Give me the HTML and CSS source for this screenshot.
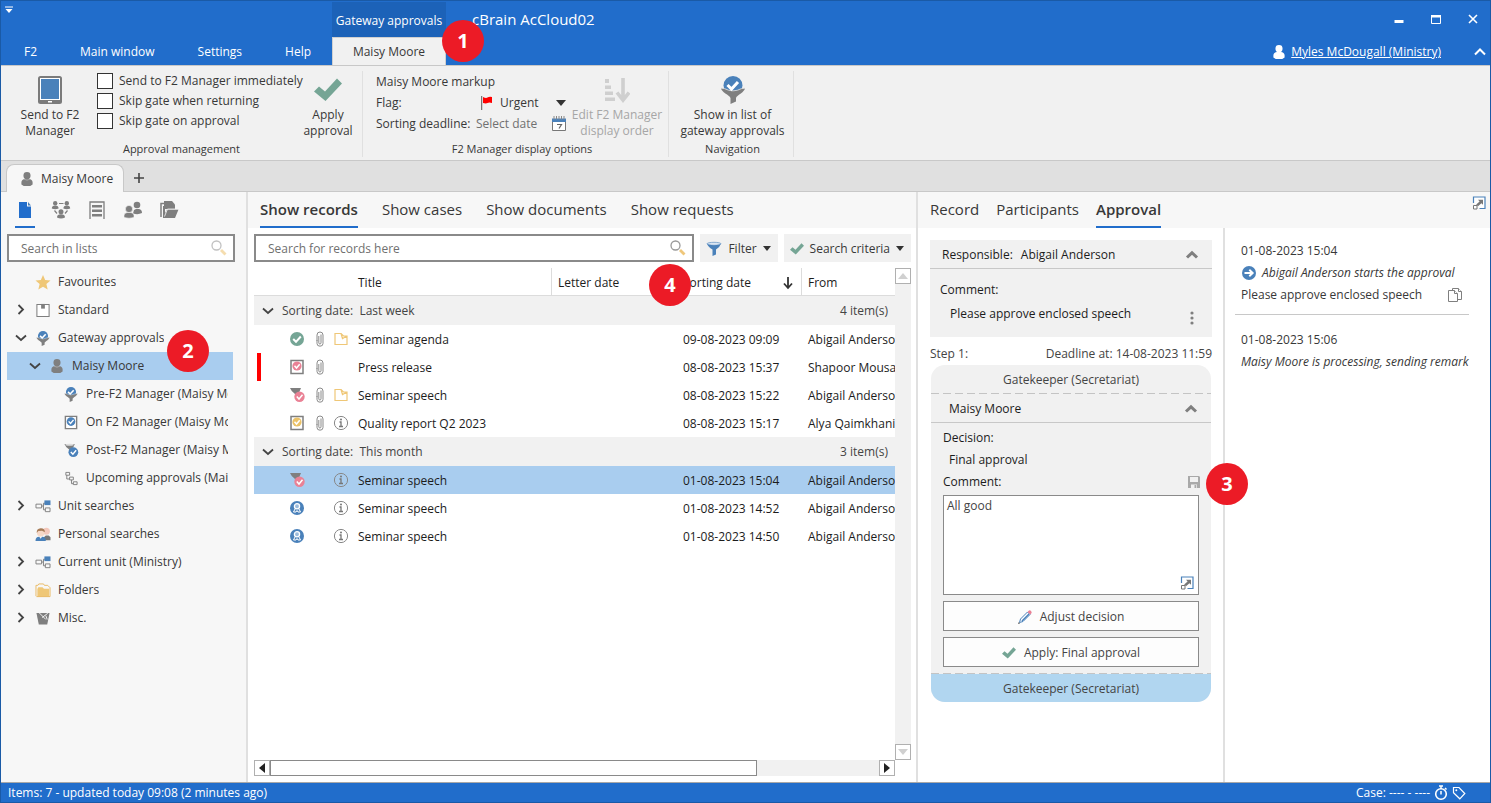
FILE: index.html
```html
<!DOCTYPE html>
<html lang="en">
<head>
<meta charset="utf-8">
<title>cBrain AcCloud02</title>
<link rel="stylesheet" href="styles.css">
</head>
<body>
<svg class="defs" aria-hidden="true">
  <symbol id="user" viewBox="0 0 12 15"><path d="M6 0a3.8 3.8 0 0 1 3.8 3.9c0 1.600-.7 3-1.800 3.600 2.300.3 4 1.300 4 3.500v2.500L9.500 15h-7L0 13.500V11c0-2.200 1.700-3.200 4-3.500C2.900 6.900 2.200 5.500 2.200 3.900A3.800 3.800 0 0 1 6 0z" fill="currentColor"/><path d="M3 7.800q3 1.800 6 0" fill="none" stroke="#fff" stroke-opacity=".35"/></symbol>
  <symbol id="gate" viewBox="0 0 24 28"><circle cx="12" cy="9.500" r="9.500" fill="#4a81ba"/><path d="M0 12l3.500.5q8.500 4.500 17 0L24 12c0 4-8 7-9 10v3.500L9.500 28v-6C8.500 19 0 16 0 12z" fill="#7f7f7f"/><path d="M0 12.300l3.500.3q8.500 4.500 17 0l3.500-.3" fill="none" stroke="#e4e4e4" stroke-width=".8"/><path d="M6.500 9l4 4 6.500-7" fill="none" stroke="#fff" stroke-width="3"/></symbol>
  <symbol id="check" viewBox="0 0 28 23"><path d="M0 13l5-5 6 5L23 0l5 5-16.500 17.500z" fill="#75a595"/></symbol>
  <symbol id="tablet-big" viewBox="0 0 24 28"><rect width="24" height="28" rx="2.500" fill="#7b7b7b"/><rect x="2.500" y="2.500" width="19" height="21" fill="#4a81ba" stroke="#fff"/><rect x="10" y="25" width="4" height="1.500" fill="#fff"/></symbol>
  <symbol id="order" viewBox="0 0 26 26"><path d="M1 2h4v4H1zM1 8.500h6v3.500H1zM1 14.500h8V18H1zM1 20.500h10V24H1z" fill="#cfcfcf"/><path d="M19 1v22M13 15.500l6 7.500 6-7.500" fill="none" stroke="#cfcfcf" stroke-width="3.600"/></symbol>
  <symbol id="down" viewBox="0 0 10 6"><path d="M0 0h10L5 6z" fill="#333"/></symbol>
  <symbol id="flag" viewBox="0 0 11 14"><path d="M.5 0v14" stroke="#777" stroke-width="1.500"/><path d="M2 1q3 1.500 4.500.5T11 1v6q-3-.8-4.500 0T2 7z" fill="#f00"/></symbol>
  <symbol id="cal" viewBox="0 0 14 15"><path d="M.5 5v9.500h13V5" fill="#fff" stroke="#777"/><path d="M0 2.500h14V6H0z" fill="#4a81ba"/><path d="M2 0v3.500M4.500 0v3.500M7 0v3.500M9.500 0v3.500M12 0v3.500" stroke="#888"/><path d="M5 8.500h4.500L7 12.500" fill="none" stroke="#666" stroke-width="1.200"/></symbol>
  <symbol id="chev-r" viewBox="0 0 14 14"><path d="M4.500 2L9 6.500 4.500 11" fill="none" stroke="#444" stroke-width="1.800"/></symbol>
  <symbol id="chev-d" viewBox="0 0 14 14"><path d="M2 4.500l5 4.500 5-4.500" fill="none" stroke="#444" stroke-width="1.800"/></symbol>
  <symbol id="chev-u" viewBox="0 0 14 14"><path d="M2 9.500L7 4.800l5 4.700" fill="none" stroke="currentColor" stroke-width="3"/></symbol>
  <symbol id="mag" viewBox="0 0 16 16"><circle cx="5.500" cy="5.500" r="4.500" fill="none" stroke="#999" stroke-width="1.300"/><path d="M10 10l4.500 4.500" stroke="#efc77b" stroke-width="2.800"/></symbol>
  <symbol id="doc" viewBox="0 0 16 18"><path d="M2 1h8v4.500h4V17H2z" fill="#216dcb"/><path d="M11 1l3 3.500h-3z" fill="#4a81ba"/></symbol>
  <symbol id="network" viewBox="0 0 20 18"><g fill="#7f7f7f"><circle cx="4.200" cy="2.300" r="2.200"/><circle cx="15.800" cy="2.300" r="2.200"/><circle cx="10" cy="10.800" r="2.500"/><path d="M.8 7.500q0-3 3.400-3t3.400 3q-3.400 1.400-6.800 0zM12.400 7.500q0-3 3.400-3t3.400 3q-3.400 1.400-6.800 0zM6 16.500q0-3.200 4-3.200t4 3.200q-4 2-8 0z"/></g><path d="M8 2.500h4.500M3.500 9.500L6 12.500M16.500 9.500L14 12.500" fill="none" stroke="#7f7f7f" stroke-width="1.200"/></symbol>
  <symbol id="cabinet" viewBox="0 0 16 18"><path d="M1 18V1h14v17" fill="none" stroke="#7f7f7f" stroke-width="1.300"/><path d="M3 4h10v2.500H3zM3 8.500h10V11H3zM3 13h10v2.500H3z" fill="#7f7f7f"/></symbol>
  <symbol id="people" viewBox="0 0 18 17"><g fill="#7f7f7f"><circle cx="13" cy="3.500" r="3.300"/><path d="M9 12l1-3.500 2-1h3c2 .5 3 1.500 3 4q-4 2-9 .5z"/><circle cx="5" cy="7.500" r="3.600" stroke="#f7f7f7" stroke-width=".6"/><path d="M0 16v-2q0-2.500 3-3h4q3 .5 3 3v2q-5 1.500-10 0z" stroke="#f7f7f7" stroke-width=".6"/></g></symbol>
  <symbol id="openfolder" viewBox="0 0 19 18"><path d="M4 0h8l3 3.500V8H4z" fill="#7f7f7f"/><path d="M1 16V2.500h3" fill="none" stroke="#7f7f7f" stroke-width="1.500"/><path d="M3 5h2v7L7 8.500h11.500L15 17H3z" fill="#7f7f7f"/><path d="M4.500 15.500L7.500 8H19" fill="none" stroke="#f7f7f7" stroke-width=".8"/></symbol>
  <symbol id="star" viewBox="0 0 16 16"><path d="M8 0l2.300 5.400 5.700.5-4.400 3.800 1.400 5.800L8 12.400 3 15.500l1.400-5.800L0 5.900l5.700-.5z" fill="#efc777"/></symbol>
  <symbol id="box" viewBox="0 0 16 16"><path d="M1.500 1.500h13v13h-13z" fill="#fff" stroke="#7f7f7f" stroke-width="1.100"/><path d="M6 1h4v5H6z" fill="#7f7f7f"/></symbol>
  <symbol id="tab-blue" viewBox="0 0 14 16"><path d="M1 1.500h12v13H1z" fill="#fff" stroke="#7f7f7f" stroke-width="1.500"/><circle cx="7" cy="7" r="4.600" fill="#4a81ba"/><path d="M4.500 6.800L6.500 9l3.200-3.800" fill="none" stroke="#fff" stroke-width="1.500"/></symbol>
  <symbol id="tab-pink" viewBox="0 0 14 16"><path d="M1 1.500h12v13H1z" fill="#fff" stroke="#7f7f7f" stroke-width="1.500"/><circle cx="7" cy="7" r="4.600" fill="#ea8195"/><path d="M4.500 6.800L6.500 9l3.200-3.800" fill="none" stroke="#fff" stroke-width="1.500"/></symbol>
  <symbol id="tab-gold" viewBox="0 0 14 16"><path d="M1 1.500h12v13H1z" fill="#fff" stroke="#7f7f7f" stroke-width="1.500"/><circle cx="7" cy="7" r="4.600" fill="#ebc268"/><path d="M4.500 6.800L6.500 9l3.200-3.800" fill="none" stroke="#fff" stroke-width="1.500"/></symbol>
  <symbol id="post-blue" viewBox="0 0 16 16"><path d="M1 1h11q-1 4-4 6v5l-2-1V7Q2 4 1 1z" fill="#7f7f7f"/><ellipse cx="6.500" cy="1.800" rx="4.500" ry="1" fill="#ddd"/><circle cx="10.500" cy="9.800" r="5.200" fill="#4a81ba"/><path d="M7.800 9.600L10 12l3.500-4.200" fill="none" stroke="#fff" stroke-width="1.500"/></symbol>
  <symbol id="post-pink" viewBox="0 0 16 16"><path d="M1 1h11q-1 4-4 6v5l-2-1V7Q2 4 1 1z" fill="#7f7f7f"/><circle cx="10.500" cy="9.800" r="5.200" fill="#ea8195"/><path d="M7.800 9.600L10 12l3.500-4.200" fill="none" stroke="#fff" stroke-width="1.500"/></symbol>
  <symbol id="steps" viewBox="0 0 16 16"><g fill="none" stroke="#7f7f7f"><path d="M2.500 1.500h4v3h-4zM6.500 6.500h4v3h-4zM10.500 11.500h4v3h-4zM3.500 4.500v4h3M8.500 9.500v4h2"/></g></symbol>
  <symbol id="unit" viewBox="0 0 16 16"><path d="M.5 5.500h6v4h-6zM6.500 7.500h2v-3h2M8.500 7.500v4h2M10.500 9.500h5v4h-5z" fill="none" stroke="#7f7f7f"/><path d="M9.500 1.500h6.500v5H9.500z" fill="#4a81ba"/></symbol>
  <symbol id="person" viewBox="0 0 16 16"><circle cx="11.500" cy="4.500" r="3.800" fill="#f4c9bd"/><path d="M9 11l2-2h3l2 2v3H9z" fill="#777"/><circle cx="5.500" cy="6" r="4" fill="#f7d9c8"/><path d="M1.300 6.500Q1 1.500 5.500 1.300T10 5.500L7 4 3 4.200z" fill="#a77c58"/><path d="M0 15q0-4.500 4-4.500l1.500 2 1.500-2q4 0 4 4.500z" fill="#4a81ba"/></symbol>
  <symbol id="folders" viewBox="0 0 16 16"><path d="M.5 14V2.500h2l1-1.500h5l1 1.500h3.500l2.500 2.500" fill="none" stroke="#e9b961"/><path d="M2 6.500l1-2h4.500L9 6h5.500v8.500H2z" fill="#efc777"/><path d="M15.500 5v9.500H1" fill="none" stroke="#e9b961"/></symbol>
  <symbol id="bin" viewBox="0 0 16 16"><path d="M1 2h14l-2.500 12.500h-9z" fill="#7f7f7f"/><path d="M4 2l7 7M7 7l6-4.500M11 5l1.500 4" stroke="#f7f7f7" fill="none"/></symbol>
  <symbol id="ok" viewBox="0 0 16 16"><circle cx="8" cy="8" r="7" fill="#75a595"/><path d="M4.200 8L7 10.800l4.800-5.300" fill="none" stroke="#fff" stroke-width="2"/></symbol>
  <symbol id="clip" viewBox="0 0 10 16"><path d="M3.800 5v6.800q0 1.200 1.100 1.200T6 11.800V3.500M2 10V4q0-3 3-3t3 3v8.500q0 2.700-3 2.700t-3-2.700V9" fill="none" stroke="#8a8a8a"/></symbol>
  <symbol id="folder" viewBox="0 0 14 14"><path d="M1 12.500v-11h6L9.500 4H13v8.500zM7 1.500l1.500 5L13 4" fill="none" stroke="#efc777" stroke-width="1.200"/></symbol>
  <symbol id="info" viewBox="0 0 16 16"><circle cx="8" cy="8" r="6.600" fill="none" stroke="#888"/><path d="M6.500 7H8v4.500M6 11.500h4" fill="none" stroke="#777" stroke-width="1.300"/><circle cx="8" cy="4.500" r="1" fill="#777"/></symbol>
  <symbol id="award" viewBox="0 0 16 16"><circle cx="8" cy="8" r="7" fill="#4a81ba"/><circle cx="8" cy="6.300" r="2.600" fill="#9dbcdc" stroke="#fff" stroke-width="1.300"/><path d="M6 9l-1.500 3H7l1-1.500L9 12h2.500L10 9" fill="none" stroke="#fff" stroke-width="1"/></symbol>
  <symbol id="funnel" viewBox="0 0 16 16"><path d="M1 2.500h14q-1 3.500-5 6v5L6.500 15V8.500Q2 6 1 2.500z" fill="#4a81ba"/><ellipse cx="8" cy="2.800" rx="7" ry="1.500" fill="#dbe6f2" stroke="#4a81ba" stroke-width=".6"/></symbol>
  <symbol id="expand" viewBox="0 0 14 14"><path d="M1.500 7V1h11.500v11.500H7.500" fill="#fff" stroke="#4a81ba" stroke-width="1.200"/><path d="M6 3.800h5v5L9.400 7.200 6 10.300 4.200 8.500l3.400-3.100z" fill="#777"/><path d="M1.500 9.500h3.500V13H1.500z" fill="#fff" stroke="#777"/></symbol>
  <symbol id="save" viewBox="0 0 14 14"><path d="M1 1h11l1 1v11H1z" fill="#a9a9a9"/><path d="M3 2h8v5H3zM4 9.500h6V13H4z" fill="#f1f1f1"/><path d="M7.500 10h1.800v3H7.500z" fill="#a9a9a9"/></symbol>
  <symbol id="pencil" viewBox="0 0 14 14"><path d="M1.500 12.500l1-3.500 7-7 2.500 2.500-7 7z" fill="#fff" stroke="#4a81ba"/><path d="M4 11l7-7" stroke="#4a81ba" stroke-width="1.500"/><path d="M9.500 2q2-2.800 3.500-1t-.8 3.500z" fill="#ea8195"/><path d="M0 14l2-.5L.8 12z" fill="#555"/></symbol>
  <symbol id="go" viewBox="0 0 16 16"><circle cx="8" cy="8" r="7" fill="#4a81ba"/><path d="M3.500 8h8M8.300 4.700L11.700 8l-3.400 3.300" fill="none" stroke="#fff" stroke-width="1.900"/></symbol>
  <symbol id="copy" viewBox="0 0 16 16"><g fill="#fff" stroke="#7f7f7f"><path d="M5.500 1.500h6l3 3v8h-9z"/><path d="M11.500 1.500v3h3"/><path d="M1.500 3.500h6l3 3v8h-9z"/><path d="M7.500 3.500v3h3"/></g></symbol>
  <symbol id="timer" viewBox="0 0 14 16"><circle cx="7" cy="9" r="5.300" fill="none" stroke="#fff" stroke-width="1.600"/><path d="M7 9.500V6M5 1h4M7 1v3M11 3l1.500 1.500" stroke="#fff" stroke-width="1.500"/></symbol>
  <symbol id="tag" viewBox="0 0 14 14"><path d="M1.500 1.500h5.500l5.800 6-5 5.300-6.300-6z" fill="none" stroke="#fff" stroke-width="1.200"/><circle cx="4.300" cy="4.300" r="1" fill="#fff"/></symbol>
</svg>

<div class="window">
  <header class="titlebar">
    <button class="quick" aria-label="Customise toolbar"><svg width="8" height="8" viewBox="0 0 8 8"><path d="M0 1h8" stroke="#fff"/><path d="M.5 3h7L4 7z" fill="#fff"/></svg></button>
    <div class="context">Gateway approvals</div>
    <h1 class="apptitle">cBrain AcCloud02</h1>
    <div class="winbtns">
      <button aria-label="Minimise"><svg width="10" height="10" viewBox="0 0 10 10"><path d="M.5 6h9v3h-9z" fill="#fff"/></svg></button>
      <button aria-label="Maximise"><svg width="10" height="10" viewBox="0 0 10 10"><path d="M.5 1.500h9v8h-9z" fill="none" stroke="#fff"/><path d="M0 1h10v2.500H0z" fill="#fff"/></svg></button>
      <button aria-label="Close"><svg width="10" height="10" viewBox="0 0 10 10"><path d="M1 1l8 8M9 1L1 9" stroke="#fff" stroke-width="1.600"/></svg></button>
    </div>
    <nav class="menu"><a href="#">F2</a><a href="#">Main window</a><a href="#">Settings</a><a href="#">Help</a></nav>
    <a class="menu-active" href="#">Maisy Moore</a>
    <div class="account"><svg class="account-icon"><use href="#user"/></svg><a href="#">Myles McDougall (Ministry)</a><button aria-label="Collapse ribbon"><svg width="12" height="12" viewBox="0 0 12 12"><path d="M1 8.500l5-5 5 5" fill="none" stroke="#fff" stroke-width="2"/></svg></button></div>
    <span class="callout callout-1">1</span>
  </header>

  <section class="ribbon">
    <div class="group group-approval">
      <div class="group-body">
        <button class="big big-send"><svg width="24" height="28"><use href="#tablet-big"/></svg><span>Send to F2<br>Manager</span></button>
        <div class="checks">
          <label><input type="checkbox">Send to F2 Manager immediately</label>
          <label><input type="checkbox">Skip gate when returning</label>
          <label><input type="checkbox">Skip gate on approval</label>
        </div>
        <button class="big big-apply"><svg width="28" height="28"><use href="#check"/></svg><span>Apply<br>approval</span></button>
      </div>
      <div class="group-label">Approval management</div>
    </div>
    <div class="group group-display">
      <div class="group-body">
        <div class="markup">
          <div class="field">Maisy Moore markup</div>
          <div class="field"><label for="flag-select">Flag:</label><svg class="flag" width="11" height="14"><use href="#flag"/></svg><select id="flag-select"><option>Urgent</option></select><svg width="10" height="6"><use href="#down"/></svg></div>
          <div class="field"><label for="deadline">Sorting deadline:</label><input id="deadline" type="text" placeholder="Select date"><svg width="14" height="15"><use href="#cal"/></svg></div>
        </div>
        <button class="big big-order" disabled><svg width="26" height="28"><use href="#order"/></svg><span>Edit F2 Manager<br>display order</span></button>
      </div>
      <div class="group-label">F2 Manager display options</div>
    </div>
    <div class="group group-nav">
      <div class="group-body"><button class="big"><svg width="24" height="28"><use href="#gate"/></svg><span>Show in list of<br>gateway approvals</span></button></div>
      <div class="group-label">Navigation</div>
    </div>
  </section>

  <div class="tabstrip">
    <button class="worktab"><svg width="12" height="14"><use href="#user"/></svg>Maisy Moore</button>
    <button class="newtab" aria-label="New tab"><svg width="10" height="10" viewBox="0 0 10 10"><path d="M5 0v10M0 5h10" stroke="#444" stroke-width="1.600"/></svg></button>
  </div>

  <main class="main">
    <aside class="side">
      <div class="side-icons">
        <button class="on" aria-label="Records"><svg width="16" height="18"><use href="#doc"/></svg></button>
        <button aria-label="Units"><svg width="20" height="18"><use href="#network"/></svg></button>
        <button aria-label="Archive"><svg width="16" height="18"><use href="#cabinet"/></svg></button>
        <button aria-label="Participants"><svg width="18" height="18"><use href="#people"/></svg></button>
        <button aria-label="Folders"><svg width="19" height="18"><use href="#openfolder"/></svg></button>
      </div>
      <div class="search side-search"><input type="text" aria-label="Search in lists" placeholder="Search in lists"><svg class="faint" width="16" height="16"><use href="#mag"/></svg></div>
      <ul class="tree">
        <li><span class="tw"></span><svg><use href="#star"/></svg><a href="#">Favourites</a></li>
        <li><svg class="tw"><use href="#chev-r"/></svg><svg><use href="#box"/></svg><a href="#">Standard</a></li>
        <li><svg class="tw"><use href="#chev-d"/></svg><svg><use href="#gate"/></svg><a href="#">Gateway approvals</a></li>
        <li class="l2 selected"><svg class="tw"><use href="#chev-d"/></svg><svg class="grey"><use href="#user"/></svg><a href="#">Maisy Moore</a><span class="callout callout-2">2</span></li>
        <li class="l3"><span class="tw"></span><svg><use href="#gate"/></svg><a href="#">Pre-F2 Manager (Maisy Moore)</a></li>
        <li class="l3"><span class="tw"></span><svg><use href="#tab-blue"/></svg><a href="#">On F2 Manager (Maisy Moore)</a></li>
        <li class="l3"><span class="tw"></span><svg><use href="#post-blue"/></svg><a href="#">Post-F2 Manager (Maisy Moore)</a></li>
        <li class="l3"><span class="tw"></span><svg><use href="#steps"/></svg><a href="#">Upcoming approvals (Maisy Moore)</a></li>
        <li><svg class="tw"><use href="#chev-r"/></svg><svg><use href="#unit"/></svg><a href="#">Unit searches</a></li>
        <li><span class="tw"></span><svg><use href="#person"/></svg><a href="#">Personal searches</a></li>
        <li><svg class="tw"><use href="#chev-r"/></svg><svg><use href="#unit"/></svg><a href="#">Current unit (Ministry)</a></li>
        <li><svg class="tw"><use href="#chev-r"/></svg><svg><use href="#folders"/></svg><a href="#">Folders</a></li>
        <li><svg class="tw"><use href="#chev-r"/></svg><svg><use href="#bin"/></svg><a href="#">Misc.</a></li>
      </ul>
    </aside>

    <section class="records">
      <nav class="tabs"><a class="on" href="#">Show records</a><a href="#">Show cases</a><a href="#">Show documents</a><a href="#">Show requests</a></nav>
      <div class="toolbar">
        <div class="search"><input type="text" aria-label="Search for records here" placeholder="Search for records here"><svg width="16" height="16"><use href="#mag"/></svg></div>
        <button class="tool"><svg width="16" height="16"><use href="#funnel"/></svg>Filter<svg width="8" height="5"><use href="#down"/></svg></button>
        <button class="tool"><svg width="14" height="12"><use href="#check"/></svg>Search criteria<svg width="8" height="5"><use href="#down"/></svg></button>
      </div>
      <div class="grid">
        <div class="grid-view">
          <table>
            <colgroup><col class="c-mark"><col class="c-state"><col class="c-clip"><col class="c-kind"><col><col class="c-date"><col class="c-date"><col class="c-from"></colgroup>
            <thead><tr><th colspan="4"></th><th>Title</th><th class="line">Letter date</th><th class="line"><div class="sort">Sorting date<svg width="10" height="14" viewBox="0 0 10 14"><path d="M5 1v10M1 7.500L5 12l4-4.500" fill="none" stroke="#333" stroke-width="1.800"/></svg></div><span class="callout callout-4">4</span></th><th class="line">From</th></tr></thead>
            <tbody>
              <tr class="grp"><td colspan="8"><div><svg width="14" height="14"><use href="#chev-d"/></svg>Sorting date:&nbsp; Last week<span>4 item(s)</span></div></td></tr>
              <tr><td></td><td><svg><use href="#ok"/></svg></td><td><svg><use href="#clip"/></svg></td><td><svg class="small"><use href="#folder"/></svg></td><td>Seminar agenda</td><td></td><td>09-08-2023 09:09</td><td>Abigail Anderson</td></tr>
              <tr><td class="urgent"></td><td><svg><use href="#tab-pink"/></svg></td><td><svg><use href="#clip"/></svg></td><td></td><td>Press release</td><td></td><td>08-08-2023 15:37</td><td>Shapoor Mousavi</td></tr>
              <tr><td></td><td><svg><use href="#post-pink"/></svg></td><td><svg><use href="#clip"/></svg></td><td><svg class="small"><use href="#folder"/></svg></td><td>Seminar speech</td><td></td><td>08-08-2023 15:22</td><td>Abigail Anderson</td></tr>
              <tr><td></td><td><svg><use href="#tab-gold"/></svg></td><td><svg><use href="#clip"/></svg></td><td><svg><use href="#info"/></svg></td><td>Quality report Q2 2023</td><td></td><td>08-08-2023 15:17</td><td>Alya Qaimkhani</td></tr>
              <tr class="grp"><td colspan="8"><div><svg width="14" height="14"><use href="#chev-d"/></svg>Sorting date:&nbsp; This month<span>3 item(s)</span></div></td></tr>
              <tr class="selected"><td></td><td><svg><use href="#post-pink"/></svg></td><td></td><td><svg><use href="#info"/></svg></td><td>Seminar speech</td><td></td><td>01-08-2023 15:04</td><td>Abigail Anderson</td></tr>
              <tr><td></td><td><svg><use href="#award"/></svg></td><td></td><td><svg><use href="#info"/></svg></td><td>Seminar speech</td><td></td><td>01-08-2023 14:52</td><td>Abigail Anderson</td></tr>
              <tr><td></td><td><svg><use href="#award"/></svg></td><td></td><td><svg><use href="#info"/></svg></td><td>Seminar speech</td><td></td><td>01-08-2023 14:50</td><td>Abigail Anderson</td></tr>
            </tbody>
          </table>
        </div>
        <div class="vbar">
          <button aria-label="Scroll up" disabled><svg width="10" height="6" viewBox="0 0 10 6"><path d="M0 6h10L5 0z" fill="#d0d0d0"/></svg></button>
          <button aria-label="Scroll down" disabled><svg width="10" height="6" viewBox="0 0 10 6"><path d="M0 0h10L5 6z" fill="#d0d0d0"/></svg></button>
        </div>
        <div class="hbar">
          <button aria-label="Scroll left"><svg width="6" height="10" viewBox="0 0 6 10"><path d="M6 0v10L0 5z" fill="#222"/></svg></button>
          <div class="track"><div class="thumb"></div></div>
          <button aria-label="Scroll right"><svg width="6" height="10" viewBox="0 0 6 10"><path d="M0 0v10l6-5z" fill="#222"/></svg></button>
        </div>
      </div>
    </section>

    <section class="detail">
      <div class="detail-head">
        <nav class="tabs tabs-tight"><a href="#">Record</a><a href="#">Participants</a><a class="on" href="#">Approval</a></nav>
        <button aria-label="Open in window"><svg width="14" height="14"><use href="#expand"/></svg></button>
      </div>
      <div class="detail-body">
        <div class="approval">
          <div class="panel">
            <div class="panel-head"><span class="who">Responsible:</span><span>Abigail Anderson</span><button aria-label="Collapse"><svg width="14" height="14"><use href="#chev-u"/></svg></button></div>
            <div class="panel-body"><div>Comment:</div><div class="remark"><span>Please approve enclosed speech</span><button aria-label="More"><svg width="4" height="14" viewBox="0 0 4 14"><g fill="#7f7f7f"><circle cx="2" cy="2" r="1.600"/><circle cx="2" cy="7" r="1.600"/><circle cx="2" cy="12" r="1.600"/></g></svg></button></div></div>
          </div>
          <div class="step"><span>Step 1:</span><span>Deadline at: 14-08-2023 11:59</span></div>
          <div class="card">
            <div class="gatekeeper">Gatekeeper (Secretariat)</div>
            <div class="panel-head card-head"><span>Maisy Moore</span><button aria-label="Collapse"><svg width="14" height="14"><use href="#chev-u"/></svg></button></div>
            <div class="card-body">
              <div class="row">Decision:</div>
              <div class="row inset">Final approval</div>
              <div class="row"><label for="comment">Comment:</label><button class="save" aria-label="Save"><svg width="14" height="14"><use href="#save"/></svg></button><span class="callout callout-3">3</span></div>
              <div class="comment"><textarea id="comment">All good</textarea><button aria-label="Expand comment"><svg width="14" height="14"><use href="#expand"/></svg></button></div>
              <button class="action"><svg width="14" height="14"><use href="#pencil"/></svg>Adjust decision</button>
              <button class="action"><svg width="14" height="12"><use href="#check"/></svg>Apply: Final approval</button>
            </div>
            <div class="gatekeeper next">Gatekeeper (Secretariat)</div>
          </div>
        </div>
        <div class="log">
          <article><div>01-08-2023 15:04</div><div class="event"><svg width="16" height="16"><use href="#go"/></svg><em>Abigail Anderson starts the approval</em></div><div class="note">Please approve enclosed speech<button aria-label="Copy"><svg width="16" height="16"><use href="#copy"/></svg></button></div></article>
          <article><div>01-08-2023 15:06</div><div><em>Maisy Moore is processing, sending remark</em></div></article>
        </div>
      </div>
    </section>
  </main>

  <footer class="status"><span>Items: 7 - updated today 09:08 (2 minutes ago)</span><span class="case">Case: ---- - ----<svg width="14" height="16"><use href="#timer"/></svg><svg width="14" height="14"><use href="#tag"/></svg></span></footer>
</div>
</body>
</html>
```

FILE: styles.css
```css
* { box-sizing: border-box; }
body { margin: 0; font: 12px/16px "Open Sans", "Noto Sans", sans-serif; color: #383838; }
button, input, select, textarea { font: inherit; color: inherit; margin: 0; padding: 0; border: 0; background: none; }
a { color: inherit; text-decoration: none; }
svg { display: block; flex: none; }
.defs { position: absolute; width: 0; height: 0; }

.window { display: flex; flex-direction: column; min-height: 100vh; border: 1px solid #1a5aa6; background: #fff; }

/* Title bar */
.titlebar { position: relative; display: grid; grid-template-columns: 331px 114px 1fr auto; grid-template-rows: 36px 28px; background: #216dcb; color: #fff; border-bottom: 1px solid #c8c8c8; }
.quick { justify-self: start; align-self: start; padding: 5px 4px; }
.context { display: flex; align-items: center; justify-content: center; background: #1c62b8; white-space: nowrap; margin-top: 1px; padding-top: 2px; }
.apptitle { margin: 0; padding-left: 26px; font-size: 15px; font-weight: 400; line-height: 36px; }
.winbtns { display: flex; align-items: center; gap: 27px; padding-right: 12px; }
.menu { display: flex; align-items: center; gap: 43px; padding: 2px 0 0 23px; white-space: nowrap; }
.menu-active { display: flex; align-items: center; justify-content: center; background: #f1f1f1; color: #383838; border: 1px solid #d0d0d0; border-width: 1px 1px 0; white-space: nowrap; }
.account { grid-column: 3 / 5; display: flex; align-items: center; justify-content: flex-end; padding: 2px 4px 0 0; }
.account-icon { width: 12px; height: 14px; margin-right: 6px; }
.account a { text-decoration: underline; }
.account button { margin-left: 33px; }

.callout { position: absolute; z-index: 2; width: 42px; height: 42px; border-radius: 50%; background: #ec1b26; color: #fff; font-size: 20px; font-weight: 700; line-height: 42px; text-align: center; }
.callout-1 { left: 441px; top: 19px; }
.callout-2 { left: 160px; top: -22px; }
.callout-3 { left: 263px; top: -8px; }
.callout-4 { left: -28px; top: -4px; }

/* Ribbon */
.ribbon { display: flex; background: #f1f1f1; border-bottom: 1px solid #c8c8c8; padding-bottom: 3px; }
.group { display: flex; flex-direction: column; border-right: 1px solid #e0e0e0; margin-top: 5px; }
.group-body { display: flex; flex: 1; min-height: 70px; }
.group-label { text-align: center; font-size: 11px; }
.group-approval { width: 362px; }
.group-display { width: 306px; padding-left: 13px; }
.group-nav { width: 125px; padding-left: 3px; }
.big { display: flex; flex: none; flex-direction: column; align-items: center; padding-top: 5px; gap: 3px; white-space: nowrap; }
.big:disabled { color: #a6a6a6; }
.big-send { width: 98px; }
.big-apply { width: 68px; }
.big-order { width: 98px; }
.group-nav .big { width: 100%; }
.checks { flex: 1; min-width: 0; white-space: nowrap; }
.checks label { display: flex; align-items: center; height: 20px; gap: 6px; margin-left: -2px; }
input[type="checkbox"] { appearance: none; flex: none; width: 16px; height: 16px; border: 1px solid #333; background: #fff; }
.markup { flex: none; width: 192px; }
.field { display: flex; align-items: center; height: 21px; white-space: nowrap; }
.field label { width: 100px; }
.flag { margin: 0 8px 0 5px; }
.field select { appearance: none; flex: 1; min-width: 0; }
.field svg:last-child { margin-right: 2px; }
.field input { flex: 1; min-width: 0; }
.field input::placeholder, .search input::placeholder { color: #707070; opacity: 1; }

/* Work tabs */
.tabstrip { display: flex; background: #e0e0e0; border-bottom: 1px solid #c8c8c8; padding: 3px 5px 0; }
.worktab { display: flex; align-items: center; gap: 8px; height: 28px; margin-bottom: -1px; padding: 0 10px 0 14px; background: #f7f7f7; border: 1px solid #c8c8c8; border-bottom: 0; border-radius: 8px 8px 0 0; white-space: nowrap; }
.worktab svg { color: #7f7f7f; }
.newtab { padding: 0 10px; }

.main { flex: 1; display: grid; grid-template-columns: 247px minmax(0, 1fr) 572px; }

/* Lists */
.side { background: #f7f7f7; border-right: 2px solid #e0e0e0; min-width: 0; }
.side-icons { display: flex; gap: 16px; padding: 0 14px; height: 36px; }
.side-icons button { display: flex; align-items: center; justify-content: center; width: 20px; padding-top: 2px; border-bottom: 2px solid transparent; }
.side-icons .on { border-color: #216dcb; }
.search { display: flex; align-items: center; height: 28px; border: 2px solid #8a8a8a; background: #fff; padding: 0 6px 0 12px; }
.search input { flex: 1; min-width: 0; padding-top: 2px; }
.faint { opacity: .6; }
.side-search { margin: 6px 11px 6px 6px; }
.tree { list-style: none; margin: 0 13px 0 6px; padding: 0; }
.tree li { position: relative; display: flex; align-items: center; height: 28px; padding: 0 5px 0 7px; }
.tree li > svg { width: 18px; height: 15px; margin: 0 6px; }
.tree li > .tw { flex: none; width: 14px; height: 14px; margin: 0; }
.tree li > .grey { height: 14px; color: #7f7f7f; }
.tree .l2 { padding-left: 21px; }
.tree .l3 { padding-left: 35px; }
.tree a { overflow: hidden; white-space: nowrap; }
.tree .selected { background: #a9cdef; }

/* Records */
.records { display: flex; flex-direction: column; min-width: 0; border-right: 2px solid #e0e0e0; }
.tabs { display: flex; gap: 24px; height: 36px; padding-left: 12px; background: #f7f7f7; font-size: 15px; white-space: nowrap; }
.tabs a { line-height: 34px; border-bottom: 2px solid transparent; }
.tabs .on { font-weight: 600; border-color: #216dcb; }
.tabs-tight { gap: 17px; }
.toolbar { display: flex; gap: 6px; padding: 6px 5px 6px 6px; }
.toolbar .search { flex: 1; }
.tool { display: flex; align-items: center; gap: 6px; padding: 1px 7px 0 6px; background: #f1f1f1; white-space: nowrap; }
.grid { flex: 1; display: grid; grid-template-columns: minmax(0, 1fr) 16px; grid-template-rows: 1fr 16px; padding: 0 5px 6px 6px; }
.grid-view { min-width: 0; overflow-x: clip; overflow-y: visible; }
table { width: 100%; table-layout: fixed; border-collapse: separate; border-spacing: 0; color: #1c1c1c; white-space: nowrap; }
.c-mark { width: 31px; }
.c-state { width: 24px; }
.c-clip { width: 22px; }
.c-kind { width: 20px; }
.c-date { width: 125px; }
.c-from { width: 94px; }
th, td { height: 28px; padding: 2px 0 0 7px; text-align: left; font-weight: 400; overflow: hidden; }
th { position: relative; overflow: visible; border-bottom: 1px solid #dcdcdc; }
.line { border-left: 1px solid #dcdcdc; padding-left: 6px; }
.sort { display: flex; align-items: center; justify-content: space-between; padding-right: 8px; }
td:nth-child(-n+4) { padding: 0; }
td > svg { width: 16px; height: 16px; margin: 0 auto; }
td > .small { width: 14px; height: 14px; }
.urgent { background: linear-gradient(#f00, #f00) 3px 0 / 4px 100% no-repeat; }
.grp td { height: 29px; background: #f1f1f1; color: #444; }
.grp div { display: flex; align-items: center; gap: 7px; padding: 0 7px; }
.grp span { margin-left: auto; }
.selected td { background: #a9cdef; }
.vbar { display: flex; flex-direction: column; justify-content: space-between; background: #f1f1f1; }
.vbar button, .hbar button { display: flex; align-items: center; justify-content: center; width: 16px; height: 16px; background: #fff; border: 1px solid #b0b0b0; }
.hbar { display: flex; }
.track { flex: 1; background: #f1f1f1; }
.thumb { width: 80%; height: 16px; background: #fff; border: 1px solid #8a8a8a; }

/* Approval detail */
.detail { display: flex; flex-direction: column; min-width: 0; }
.detail-head { display: flex; justify-content: space-between; align-items: flex-start; background: #f7f7f7; }
.detail-head button { padding: 4px; }
.detail-body { flex: 1; display: grid; grid-template-columns: 307px minmax(0, 1fr); }
.approval { padding: 12px 11px 0 12px; border-right: 2px solid #e0e0e0; color: #1c1c1c; }
.panel { background: #f1f1f1; }
.panel-head { display: flex; align-items: center; height: 29px; padding: 1px 13px 0 12px; border-bottom: 1px solid #c8c8c8; }
.panel-head button { margin-left: auto; color: #7f7f7f; }
.who { margin-right: 8px; }
.panel-body { padding: 13px 18px 12px 10px; }
.remark { display: flex; justify-content: space-between; height: 27px; padding: 8px 0 0 10px; }
.remark button { align-self: flex-end; }
.step { display: flex; justify-content: space-between; padding: 9px 0 3px; color: #444; white-space: nowrap; }
.card { margin: 0 1px; background: #f1f1f1; border-radius: 14px; }
.gatekeeper { height: 29px; padding-top: 1px; line-height: 28px; text-align: center; color: #444; background: repeating-linear-gradient(90deg, #c4c4c4 0 8px, transparent 8px 12px) 0 100% / 100% 1px no-repeat; }
.card-head { padding-left: 18px; }
.card-body { padding: 4px 12px 6px; }
.row { position: relative; display: flex; align-items: center; height: 22px; }
.inset { padding-left: 6px; }
.row .save { margin: 0 -2px 0 auto; }
.comment { position: relative; display: flex; height: 100px; margin-top: 2px; background: #fff; border: 1px solid #8a8a8a; }
.comment textarea { flex: 1; resize: none; padding: 2px 3px; color: #444; outline: 0; }
.comment button { position: absolute; right: 4px; bottom: 4px; }
.action { display: flex; align-items: center; justify-content: center; gap: 8px; width: 100%; height: 30px; margin-top: 6px; padding-top: 2px; border: 1px solid #8a8a8a; background: #fdfdfd; color: #444; }
.next { padding-top: 2px; background: repeating-linear-gradient(90deg, #c4c4c4 0 8px, #f1f1f1 8px 12px) 0 0 / 100% 1px no-repeat #b1d6f0; border-radius: 0 0 14px 14px; }
.log { padding: 12px 21px 0 10px; white-space: nowrap; }
.log article { padding: 0 6px 8px; }
.log article > div { display: flex; align-items: center; height: 22px; }
.log article + article { border-top: 1px solid #c8c8c8; padding-top: 14px; }
.log .event { gap: 5px; }
.note button { margin-left: auto; }

.status { display: flex; justify-content: space-between; align-items: center; height: 20px; padding: 0 24px 0 7px; background: #216dcb; color: #fff; border-top: 1px solid #a8a8a8; }
.case { display: flex; align-items: center; gap: 4px; }
```
